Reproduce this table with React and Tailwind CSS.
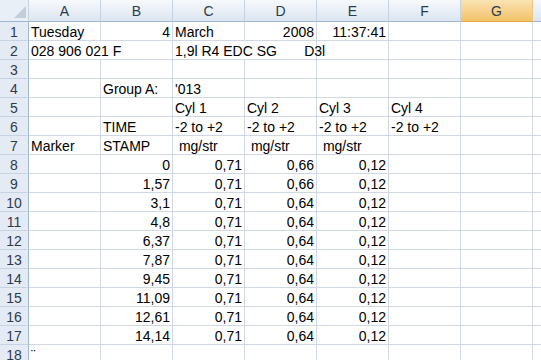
import React from "react";

const cols = ["A", "B", "C", "D", "E", "F", "G"];

// each row: list of cells for A..G, { t: text, r: right aligned, span: columns }
const times = ["0", "1,57", "3,1", "4,8", "6,37", "7,87", "9,45", "11,09", "12,61", "14,14"];
const dVals = ["0,66", "0,66", "0,64", "0,64", "0,64", "0,64", "0,64", "0,64", "0,64", "0,64"];

const rows = [
  [{ t: "Tuesday" }, { t: "4", r: true }, { t: "March" }, { t: "2008", r: true }, { t: "11:37:41", r: true }, {}, {}],
  [{ t: "028 906 021 F", span: 2 }, { t: "1,9l R4 EDC SG       D3l", span: 2 }, {}, {}, {}],
  [{}, {}, {}, {}, {}, {}, {}],
  [{}, { t: "Group A:" }, { t: "'013" }, {}, {}, {}, {}],
  [{}, {}, { t: "Cyl 1" }, { t: "Cyl 2" }, { t: "Cyl 3" }, { t: "Cyl 4" }, {}],
  [{}, { t: "TIME" }, { t: "-2 to +2" }, { t: "-2 to +2" }, { t: "-2 to +2" }, { t: "-2 to +2" }, {}],
  [{ t: "Marker" }, { t: "STAMP" }, { t: " mg/str" }, { t: " mg/str" }, { t: " mg/str" }, {}, {}],
  ...times.map((v, i) => [
    {},
    { t: v, r: true },
    { t: "0,71", r: true },
    { t: dVals[i], r: true },
    { t: "0,12", r: true },
    {},
    {},
  ]),
  [{ t: "¨" }, {}, {}, {}, {}, {}, {}],
];

function Cell({ cell }) {
  const span = cell.span || 1;
  return (
    <div
      className={`flex h-full shrink-0 items-end border-r border-[#d0d7e5] pl-[2px] pr-[2px] ${
        cell.r ? "justify-end" : "justify-start"
      } ${span === 2 ? "w-[144px]" : "w-[72px]"}`}
    >
      <span className="whitespace-pre leading-[16px]">{cell.t || ""}</span>
    </div>
  );
}

export default function App() {
  return (
    <div
      className="h-[360px] w-[541px] overflow-hidden bg-white text-[14px] text-black"
      style={{ fontFamily: '"Liberation Sans", Arial, sans-serif' }}
    >
      {/* column headers */}
      <div className="flex h-[22px]">
        <div className="flex w-[29px] shrink-0 items-end justify-end border-r border-b border-r-[#c5d3e3] border-b-[#9eb6ce] bg-[#e9eff7] pr-[2px] pb-[3px]">
          <svg width="12" height="12" viewBox="0 0 12 12">
            <polygon points="12,0 12,12 0,12" fill="#c3cedb" />
          </svg>
        </div>
        {cols.map((c) => (
          <div
            key={c}
            className={`flex w-[72px] shrink-0 items-center justify-center border-r border-b text-[#2f3b4c] ${
              c === "G"
                ? "border-r-[#f2c77c] border-b-[#e9a84c] bg-gradient-to-b from-[#fae3b3] to-[#f2c266]"
                : "border-r-[#c5d3e3] border-b-[#9eb6ce] bg-gradient-to-b from-[#f7f9fc] to-[#dce5f0]"
            }`}
          >
            <span className="leading-[16px]">{c}</span>
          </div>
        ))}
        <div className="flex-1 border-b border-b-[#9eb6ce] bg-gradient-to-b from-[#f7f9fc] to-[#dce5f0]" />
      </div>

      {/* rows */}
      {rows.map((row, i) => (
        <div key={i} className="flex h-[19px]">
          <div className="flex w-[29px] shrink-0 items-end justify-center border-r border-b border-r-[#9eb6ce] border-b-[#c5d3e3] bg-[#e4ebf5] text-[#2f3b4c]">
            <span className="leading-[16px]">{i + 1}</span>
          </div>
          <div className="flex flex-1 border-b border-[#d0d7e5]">
            {row.map((cell, j) => (
              <Cell key={j} cell={cell} />
            ))}
          </div>
        </div>
      ))}
    </div>
  );
}
